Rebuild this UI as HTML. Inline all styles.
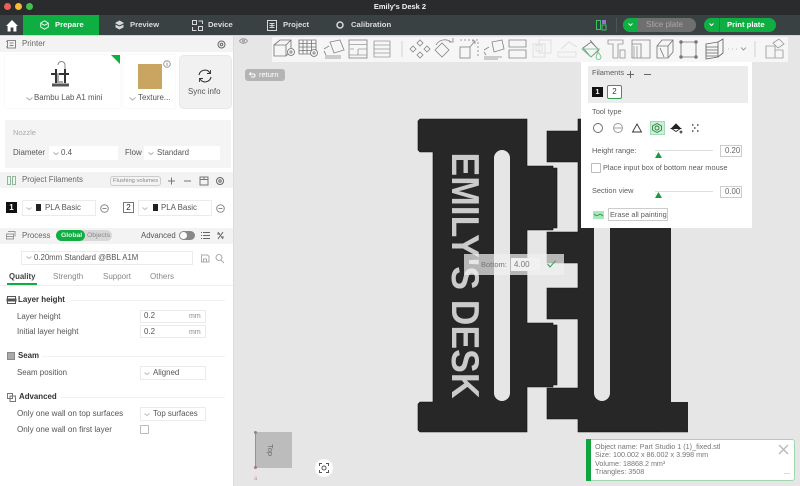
<!DOCTYPE html>
<html><head><meta charset="utf-8">
<style>
html,body{margin:0;padding:0;width:800px;height:486px;overflow:hidden;background:#e6e6e6}
body{font-family:"Liberation Sans",sans-serif;font-size:7.9px;color:#555;position:relative}
#w{position:absolute;left:0;top:0;width:800px;height:486px;overflow:hidden;filter:blur(.35px)}
.a{position:absolute}
.t{position:absolute;white-space:nowrap;line-height:10px}
.p{font-size:7.4px;color:#5c5c5c}
.hd{position:absolute;left:0;width:233px;height:16px;background:#f3f3f3}
.in{position:absolute;background:#fff;border:1px solid #ebebeb;box-sizing:border-box}
.h{font-weight:bold;color:#333}
.nav{position:absolute;top:15px;color:#dcdcdc;font-size:7.700px;font-weight:bold;line-height:20px;white-space:nowrap}
svg{position:absolute;overflow:visible}
</style></head><body><div id="w">

<!-- title bar -->
<div class="a" style="left:0;top:0;width:800px;height:15px;background:#2a2b2d"></div>
<div class="a" style="left:4px;top:3px;width:7px;height:7px;border-radius:50%;background:#ec5f56"></div>
<div class="a" style="left:15px;top:3px;width:7px;height:7px;border-radius:50%;background:#f4b93e"></div>
<div class="a" style="left:26px;top:3px;width:7px;height:7px;border-radius:50%;background:#3ec449"></div>
<div class="t" style="left:300px;width:200px;top:2px;text-align:center;color:#f2f2f2;font-weight:bold;font-size:7.500px">Emily's Desk 2</div>

<!-- tab bar -->
<div class="a" style="left:0;top:15px;width:800px;height:20px;background:#3a4143"></div>
<div class="a" style="left:0;top:35px;width:800px;height:1px;background:#d5d5d5"></div>
<svg style="left:6px;top:20px" width="12" height="12" viewBox="0 0 12 12"><path d="M6 0L0 6h1.600v5.500h3V7.500h2.800v4h3V6H12z" fill="#fff"/></svg>
<div class="a" style="left:23px;top:15px;width:76px;height:20px;background:#0fae42"></div>
<svg style="left:40px;top:20px" width="9" height="10" viewBox="0 0 9 10" fill="none" stroke="#e8f8ec" stroke-width="1"><path d="M4.500 .8L8.300 3v4L4.500 9.200.7 7V3zM.9 3.300l3.600 2 3.600-2"/></svg>
<div class="nav" style="left:55px;color:#f2fff5">Prepare</div>
<svg style="left:115px;top:20px" width="9" height="10" viewBox="0 0 9 10"><path d="M4.500 .5L8.500 2.600v4.800L4.500 9.500.5 7.400V2.600z" fill="#d8d8d8"/><path d="M.5 4l4 2 4-2" stroke="#3a4143" fill="none"/></svg>
<div class="nav" style="left:130px">Preview</div>
<svg style="left:192px;top:20px" width="11" height="11" viewBox="0 0 11 11" fill="none" stroke="#d8d8d8" stroke-width="1"><rect x=".5" y=".5" width="4" height="4"/><rect x="6.500" y="6.500" width="4" height="4"/><path d="M6.500 1h4v3M.5 7v3.500h4"/></svg>
<div class="nav" style="left:208px">Device</div>
<svg style="left:267px;top:20px" width="10" height="11" viewBox="0 0 10 11" fill="none" stroke="#d8d8d8" stroke-width="1"><rect x=".5" y=".5" width="9" height="10"/><path d="M2.500 3.500h5M2.500 5.500h5M2.500 7.500h5M5 3v5"/></svg>
<div class="nav" style="left:283px">Project</div>
<svg style="left:336px;top:21px" width="8" height="8" viewBox="0 0 8 8" fill="none" stroke="#d8d8d8" stroke-width="1.500"><circle cx="4" cy="4" r="3"/></svg>
<div class="nav" style="left:351px">Calibration</div>

<svg style="left:596px;top:20px" width="10" height="10" viewBox="0 0 10 10"><rect x=".5" y=".5" width="4" height="9" fill="none" stroke="#3fc16a"/><rect x="6" y="0" width="4" height="4" fill="#9a6fd0"/><rect x="6" y="5" width="4" height="5" fill="none" stroke="#3fc16a"/></svg>
<div class="a" style="left:616px;top:18px;width:1px;height:14px;background:#4d5557"></div>
<div class="a" style="left:623px;top:18px;width:73px;height:14px;border-radius:7px;background:#6f6f6f;overflow:hidden"><div class="a" style="left:0;top:0;width:15px;height:14px;background:#0fae42"></div></div>
<svg style="left:628px;top:23px" width="5" height="4" fill="none" stroke="#fff"><path d="M.5 .5l2 2 2-2"/></svg>
<div class="t" style="left:646px;top:20px;color:#a9a9a9;font-size:8px">Slice plate</div>
<div class="a" style="left:704px;top:18px;width:72px;height:14px;border-radius:7px;background:#0fae42"></div>
<div class="a" style="left:719px;top:18px;width:1px;height:14px;background:#2f7d46"></div>
<svg style="left:709px;top:23px" width="5" height="4" fill="none" stroke="#fff"><path d="M.5 .5l2 2 2-2"/></svg>
<div class="t" style="left:727px;top:20px;color:#fff;font-weight:bold;font-size:7.700px">Print plate</div>

<!-- sidebar -->
<div class="a" style="left:0;top:36px;width:233px;height:450px;background:#fff"></div>
<div class="hd" style="top:36px"></div>
<svg style="left:6px;top:40px" width="10" height="9" fill="none" stroke="#888"><rect x="1.500" y=".5" width="8" height="7.500"/><path d="M0 1.500h1.500M0 7h1.500M3.500 3h4M3.500 5.500h4"/></svg>
<div class="t" style="left:22px;top:39px;color:#666">Printer</div>
<svg style="left:217px;top:40px" width="9" height="9" fill="none" stroke="#666"><circle cx="4.500" cy="4.500" r="3.500"/><circle cx="4.500" cy="4.500" r="1.300"/></svg>

<div class="a" style="left:5px;top:55px;width:115px;height:53px;background:#fff;box-shadow:0 0 2px #eee"></div>
<svg style="left:111px;top:55px" width="9" height="9"><path d="M0 0h9v9z" fill="#0fae42"/></svg>
<svg style="left:50px;top:61px" width="21" height="28" viewBox="0 0 21 28" fill="none" stroke="#333"><path d="M8 4a3.500 3.500 0 0 1 7 0v4" stroke="#888"/><path d="M6 8v14M15 8v14" stroke-width="2"/><path d="M1 13h18" stroke-width="2"/><path d="M2 24h17" stroke-width="3" stroke="#555"/><path d="M8 12v9h5" stroke="#aaa" stroke-width="2"/></svg>
<svg style="left:26px;top:97px" width="7" height="4" fill="none" stroke="#aaa"><path d="M.5 .5l3 2.500 3-2.500"/></svg>
<div class="t" style="left:34px;top:93px">Bambu Lab A1 mini</div>

<div class="a" style="left:123px;top:55px;width:52px;height:53px;background:#fff;box-shadow:0 0 2px #eee"></div>
<div class="a" style="left:138px;top:64px;width:24px;height:25px;background:#c9a561"></div>
<svg style="left:163px;top:60px" width="8" height="8" fill="none" stroke="#999"><circle cx="4" cy="4" r="3.300"/><path d="M4 3v3M4 1.800v.7"/></svg>
<svg style="left:129px;top:97px" width="7" height="4" fill="none" stroke="#aaa"><path d="M.5 .5l3 2.500 3-2.500"/></svg>
<div class="t" style="left:138px;top:93px">Texture...</div>

<div class="a" style="left:179px;top:55px;width:53px;height:54px;background:#f1f1f1;border-radius:5px;border:1px solid #e8e8e8;box-sizing:border-box"></div>
<svg style="left:197px;top:69px" width="16" height="14" viewBox="0 0 16 14" fill="none" stroke="#333" stroke-width="1.100"><path d="M2 6a6 6 0 0 1 11-2M14 8a6 6 0 0 1-11 2"/><path d="M13.500 1v3.500H10M2.500 13V9.500H6" stroke-width=".9"/></svg>
<div class="t" style="left:188px;top:87px">Sync info</div>

<div class="a" style="left:5px;top:120px;width:226px;height:48px;background:#f4f4f4"></div>
<div class="t" style="left:13px;top:128px;color:#aaa;font-size:7.500px">Nozzle</div>
<div class="t" style="left:13px;top:148px">Diameter</div>
<div class="a" style="left:49px;top:146px;width:69px;height:14px;background:#fff"></div>
<svg style="left:53px;top:152px" width="6" height="4" fill="none" stroke="#aaa"><path d="M.5 .5l2.500 2 2.500-2"/></svg>
<div class="t" style="left:61px;top:148px">0.4</div>
<div class="t" style="left:125px;top:148px">Flow</div>
<div class="a" style="left:144px;top:146px;width:76px;height:14px;background:#fff"></div>
<svg style="left:148px;top:152px" width="6" height="4" fill="none" stroke="#aaa"><path d="M.5 .5l2.500 2 2.500-2"/></svg>
<div class="t" style="left:157px;top:148px">Standard</div>

<!-- filaments -->
<div class="hd" style="top:172px"></div>
<svg style="left:7px;top:176px" width="9" height="9" fill="none" stroke="#8fb79a"><rect x=".5" y=".5" width="3" height="8"/><rect x="5.500" y=".5" width="3" height="8"/></svg>
<div class="t" style="left:22px;top:175px;color:#666">Project Filaments</div>
<div class="a" style="left:110px;top:176px;width:51px;height:10px;border:1px solid #ccc;border-radius:3px;box-sizing:border-box"></div>
<div class="t" style="left:113px;top:176px;font-size:5.800px;color:#888">Flushing volumes</div>
<svg style="left:168px;top:176px" width="60" height="10" fill="none" stroke="#777"><path d="M0 5h7M3.500 1.500v7M16 5h7"/><rect x="32" y="1" width="8" height="8"/><path d="M32 3.500h8M36 1v2.500"/><circle cx="52" cy="5" r="3.500" stroke="#666"/><circle cx="52" cy="5" r="1.200" stroke="#666"/></svg>

<div class="a" style="left:6px;top:202px;width:11px;height:11px;background:#111;color:#fff;text-align:center;font-size:8px;line-height:11px;font-weight:bold">1</div>
<div class="in" style="left:22px;top:200px;width:74px;height:16px"></div>
<svg style="left:26px;top:207px" width="6" height="4" fill="none" stroke="#bbb"><path d="M.5 .5l2.500 2 2.500-2"/></svg>
<div class="a" style="left:36px;top:204px;width:5px;height:7px;background:#222"></div>
<div class="t" style="left:45px;top:203px">PLA Basic</div>
<svg style="left:100px;top:204px" width="9" height="9" fill="none" stroke="#888"><circle cx="4.500" cy="4.500" r="3.800"/><path d="M2.500 4.500h4"/></svg>
<div class="a" style="left:123px;top:202px;width:11px;height:11px;background:#fff;border:1px solid #777;box-sizing:border-box;color:#222;text-align:center;font-size:8px;line-height:9px">2</div>
<div class="in" style="left:138px;top:200px;width:74px;height:16px"></div>
<svg style="left:142px;top:207px" width="6" height="4" fill="none" stroke="#bbb"><path d="M.5 .5l2.500 2 2.500-2"/></svg>
<div class="a" style="left:153px;top:204px;width:5px;height:7px;background:#222"></div>
<div class="t" style="left:161px;top:203px">PLA Basic</div>
<svg style="left:216px;top:204px" width="9" height="9" fill="none" stroke="#888"><circle cx="4.500" cy="4.500" r="3.800"/><path d="M2.500 4.500h4"/></svg>

<!-- process -->
<div class="hd" style="top:228px"></div>
<svg style="left:6px;top:231px" width="10" height="9" fill="none" stroke="#999"><path d="M2 .5h7v5M.5 3h7v5h-7zM.5 5.500h7"/></svg>
<div class="t" style="left:22px;top:231px;color:#666">Process</div>
<div class="a" style="left:56px;top:230px;width:56px;height:11px;border-radius:6px;background:#d8d8d8"></div>
<div class="a" style="left:56px;top:230px;width:29px;height:11px;border-radius:6px;background:#0fae42"></div>
<div class="t" style="left:61px;top:231px;color:#dff5e5;font-size:6.800px;font-weight:bold">Global</div>
<div class="t" style="left:87px;top:231px;color:#888;font-size:6.800px">Objects</div>
<div class="t" style="left:141px;top:231px;color:#555;font-size:7.800px">Advanced</div>
<div class="a" style="left:179px;top:231px;width:16px;height:9px;border-radius:5px;background:#888"></div>
<div class="a" style="left:180px;top:232px;width:7px;height:7px;border-radius:50%;background:#fff"></div>
<svg style="left:201px;top:231px" width="24" height="9" fill="none" stroke="#666"><path d="M2 1.500h7M2 4.500h7M2 7.500h7M0 1.500h1M0 4.500h1M0 7.500h1"/><path d="M17 1l5 7M22 1l-2 3M17 8l2-3M16 3h3M20 6h3"/></svg>

<div class="in" style="left:21px;top:251px;width:172px;height:14px"></div>
<svg style="left:26px;top:256px" width="6" height="4" fill="none" stroke="#bbb"><path d="M.5 .5l2.500 2 2.500-2"/></svg>
<div class="t" style="left:34px;top:253px;font-size:7.800px">0.20mm Standard @BBL A1M</div>
<svg style="left:201px;top:254px" width="24" height="9" fill="none" stroke="#aaa"><path d="M.5 1h6l1.500 1.500V8h-7.500z"/><rect x="2.500" y="5" width="3" height="3"/><circle cx="18" cy="3.500" r="3"/><path d="M20 6l3 3"/></svg>

<div class="t" style="left:9px;top:272px;font-weight:bold;color:#444;font-size:7.800px">Quality</div>
<div class="t" style="left:53px;top:272px;color:#888;font-size:8px">Strength</div>
<div class="t" style="left:103px;top:272px;color:#888;font-size:8px">Support</div>
<div class="t" style="left:150px;top:272px;color:#888;font-size:8px">Others</div>
<div class="a" style="left:0;top:285px;width:233px;height:1px;background:#eee"></div>
<div class="a" style="left:7px;top:283px;width:30px;height:2px;background:#0fae42"></div>

<svg style="left:7px;top:296px" width="9" height="8" fill="none" stroke="#555"><rect x=".5" y=".5" width="8" height="7"/><rect x="0" y="3" width="9" height="2" fill="#555"/></svg>
<div class="t h" style="left:18px;top:295px">Layer height</div>
<div class="a" style="left:70px;top:300px;width:155px;height:1px;background:#f2f2f2"></div>
<div class="t" style="left:17px;top:312px">Layer height</div>
<div class="in" style="left:140px;top:310px;width:66px;height:13px"></div>
<div class="t" style="left:144px;top:311px">0.2</div>
<div class="t" style="left:189px;top:312px;font-size:7px;color:#888">mm</div>
<div class="t" style="left:17px;top:327px">Initial layer height</div>
<div class="in" style="left:140px;top:325px;width:66px;height:13px"></div>
<div class="t" style="left:144px;top:327px">0.2</div>
<div class="t" style="left:189px;top:328px;font-size:7px;color:#888">mm</div>

<div class="a" style="left:7px;top:352px;width:8px;height:8px;background:#aaa;border:1px solid #888;box-sizing:border-box"></div>
<div class="t h" style="left:18px;top:351px">Seam</div>
<div class="a" style="left:42px;top:356px;width:183px;height:1px;background:#f2f2f2"></div>
<div class="t" style="left:17px;top:368px">Seam position</div>
<div class="in" style="left:140px;top:366px;width:66px;height:14px"></div>
<svg style="left:144px;top:372px" width="6" height="4" fill="none" stroke="#bbb"><path d="M.5 .5l2.500 2 2.500-2"/></svg>
<div class="t" style="left:153px;top:368px">Aligned</div>

<svg style="left:7px;top:393px" width="9" height="9" fill="none" stroke="#777"><rect x=".5" y=".5" width="5" height="5"/><rect x="3" y="3" width="5.500" height="5.500"/></svg>
<div class="t h" style="left:19px;top:392px">Advanced</div>
<div class="a" style="left:60px;top:397px;width:165px;height:1px;background:#f2f2f2"></div>
<div class="t" style="left:17px;top:409px;font-size:8.100px">Only one wall on top surfaces</div>
<div class="in" style="left:140px;top:407px;width:66px;height:14px"></div>
<svg style="left:144px;top:413px" width="6" height="4" fill="none" stroke="#bbb"><path d="M.5 .5l2.500 2 2.500-2"/></svg>
<div class="t" style="left:153px;top:409px">Top surfaces</div>
<div class="t" style="left:17px;top:425px;font-size:8.100px">Only one wall on first layer</div>
<div class="a" style="left:140px;top:425px;width:9px;height:9px;border:1px solid #bbb;box-sizing:border-box;border-radius:1px"></div>

<div class="a" style="left:233px;top:36px;width:1px;height:450px;background:#dcdcdc"></div>

<!-- viewport shapes -->
<svg style="left:0;top:0" width="800" height="486">
<path fill="#272727" stroke="#111" stroke-width=".6" d="M420 119H527V166H553V168H557V228H553V230H527V323H553V325H557V385H553V387H527V432H420L418 430V404L420 402H433V152H420L418 150V121Z"/>
<path fill="#272727" stroke="#111" stroke-width=".6" d="M578 119H700V432H578V419H547V388H578V319H547V288H578V263H547V232H578V162H547V131H578Z"/>
<path fill="#272727" d="M660 402H685L688 404V430L685 432H660Z"/>
<path fill="#e6e6e6" d="M671 228H705V402H671Z"/>
<path fill="#e6e6e6" d="M688 402H705V436H688Z"/>
<path fill="#e6e6e6" d="M494 158a8 8 0 0 1 16 0V393a8 8 0 0 1-16 0Z"/>
<path fill="#e6e6e6" d="M594 210H610V393a8 8 0 0 1-16 0Z"/>
<text transform="translate(452 152.500) rotate(90)" font-family="Liberation Sans" font-weight="bold" font-size="38.500" fill="#cbcbcb" textLength="246" lengthAdjust="spacingAndGlyphs">EMILY'S DESK</text>
</svg>

<!-- Bottom input -->
<div class="a" style="left:464px;top:254px;width:100px;height:21px;background:rgba(240,240,240,.72)"></div>
<div class="t" style="left:481px;top:260px;color:#777;font-size:7.500px">Bottom:</div>
<div class="a" style="left:511px;top:258px;width:29px;height:13px;background:#f1f1f1"></div>
<div class="t" style="left:514px;top:260px;color:#777;font-size:8px">4.00</div>
<svg style="left:547px;top:260px" width="9" height="8" fill="none" stroke="#2f9d50" stroke-width="1"><path d="M.5 4l2.500 3L8.500 .8"/></svg>

<!-- toolbar -->
<div class="a" style="left:272px;top:37px;width:516px;height:25px;background:#f6f6f6"></div>
<svg style="left:270px;top:36px" width="530" height="26" fill="none" stroke="#777" stroke-width=".85">
<!-- box plus -->
<path d="M4 9l6-5h11v11l-5 5H4zM4 9h12v11M16 9l5-5"/><circle cx="21" cy="16" r="3.500" fill="#f6f6f6"/><path d="M19 16h4M21 14v4"/>
<!-- grid plus -->
<path d="M29 4h17v14H29zM29 7.500h17M29 11h17M29 14.500h17M33 4v14M37 4v14M41.500 4v14"/><circle cx="44" cy="17" r="3.500" fill="#f6f6f6"/><path d="M42 17h4M44 15v4"/>
<!-- arrange -->
<path d="M60 6l10-2 4 10-10 3zM54 13l5-3M54 15l2 4M55 20h16M55 22h16" stroke="#888"/>
<!-- layout -->
<rect x="79" y="4" width="18" height="18" stroke="#888"/><path d="M79 8.500h18M79 19h18M88 13h9M88 13v6M80 13h4" stroke="#999"/>
<!-- lines -->
<path d="M104 5h16v4h-16zM104 9h16v4h-16zM104 13h16v4h-16zM104 17h16v4h-16z" stroke="#999"/>
<path d="M132 5v16" stroke="#ccc"/>
<!-- move -->
<path d="M147 7l3-3 3 3-3 3zM147 19l3-3 3 3-3 3zM140 13l3-3 3 3-3 3zM154 13l3-3 3 3-3 3z" stroke="#888"/>
<!-- rotate -->
<path d="M165 14l7-7 7 7-7 7zM166 9a10 10 0 0 1 15-3M183 2v4h-4" stroke="#888"/>
<!-- scale -->
<rect x="190" y="11" width="10" height="11" stroke="#888"/><path d="M190 4h18v16" stroke-dasharray="2 2" stroke="#888"/><path d="M200 11l5-6M202 5h3v3" stroke="#888"/>
<!-- lay flat -->
<path d="M222 6l10-2 2 9-10 3zM214 14l5-3M214 16l2 3M214 21h18M214 23h14" stroke="#888"/>
<!-- split -->
<path d="M239 4h17v7h-17zM239 14h17v8h-17z" stroke="#888"/>
<!-- faded -->
<g stroke="#dcdcdc"><rect x="263" y="8" width="12" height="13"/><rect x="269" y="4" width="12" height="13"/><rect x="266" y="9" width="6" height="6"/><path d="M291 13l8-7 8 5M288 16h18v5h-18z"/></g>
<!-- paint -->
<path d="M313 12l8-6 8 8-8 7zM320 4l6 7" stroke="#777"/><path d="M312 13h17l-8 8z" stroke="#6cbf86"/><path d="M328 16c2 3 3 4 3 5a2.500 2.500 0 0 1-5 0c0-1 1-2 2-5z" stroke="#6cbf86"/>
<!-- T -->
<path d="M338 4h15v4h-5v14h-5V8h-5z" stroke="#999"/><rect x="350" y="14" width="5" height="8" stroke="#999"/>
<!-- assembly -->
<path d="M362 4h18v18h-18zM362 8h9v14h-9z" stroke="#888"/><path d="M364 10v12M367 10v12" stroke="#999"/>
<!-- cube -->
<path d="M387 10l5-6h11v12l-5 6h-11zM387 10h11v12M398 10l5-6M390 12l4 9" stroke="#777"/>
<!-- corners -->
<rect x="411" y="6" width="15" height="15" rx="2"/><circle cx="411" cy="6" r="1.300" fill="#777"/><circle cx="426" cy="6" r="1.300" fill="#777"/><circle cx="411" cy="21" r="1.300" fill="#777"/><circle cx="426" cy="21" r="1.300" fill="#777"/>
<!-- layers -->
<path d="M436 8l12-2 5-3v14l-5 4-12 2zM436 11h12M436 14h12M436 17h12M436 20h12M448 6v15" stroke="#666"/>
<!-- more -->
<path d="M458 13h1M462 13h1M466 13h1" stroke="#aaa"/><path d="M471 11.500l2.500 2.500 2.500-2.500" stroke="#888"/>
<path d="M485 5v16" stroke="#ccc"/>
<!-- assembly right -->
<path d="M496 10h9v12h-9zM505 14h8v8h-8zM503 7l6-4 5 5-6 4z" stroke="#999"/>
</svg>

<!-- eye & return -->
<svg style="left:239px;top:38px" width="9" height="6" fill="none" stroke="#999"><path d="M.5 3c2-3 6-3 8 0-2 3-6 3-8 0z"/><circle cx="4.500" cy="3" r="1"/></svg>
<div class="a" style="left:245px;top:69px;width:40px;height:12px;border-radius:3px;background:#b4b4b4"></div>
<div class="t" style="left:259px;top:70px;color:#fff;font-size:7.500px">return</div>
<svg style="left:249px;top:72px" width="7" height="6" fill="none" stroke="#fff"><path d="M2 .5L.5 2 2 3.500M.5 2h4a1.500 1.500 0 0 1 0 3H2"/></svg>

<!-- popup -->
<div class="a" style="left:581px;top:62px;width:171px;height:166px;background:#fff"></div>
<div class="a" style="left:588px;top:66px;width:160px;height:37px;background:#ececec"></div>
<div class="t p" style="left:592px;top:68px">Filaments</div>
<svg style="left:627px;top:70px" width="26" height="9" fill="none" stroke="#666"><path d="M0 4.500h7M3.500 1v7M17 4.500h7"/></svg>
<div class="a" style="left:592px;top:87px;width:11px;height:10px;background:#111;color:#fff;text-align:center;font-size:7.500px;line-height:10px;font-weight:bold">1</div>
<div class="a" style="left:607px;top:85px;width:15px;height:14px;background:#fff;border:1px solid #2f9d50;border-radius:2px;box-sizing:border-box;color:#333;text-align:center;font-size:8px;line-height:12px">2</div>
<div class="t p" style="left:592px;top:107px">Tool type</div>
<div class="a" style="left:650px;top:121px;width:15px;height:14px;background:#cdeed7;border:1px solid #a0dcb4;box-sizing:border-box"></div>
<svg style="left:590px;top:122px" width="112" height="12" fill="none" stroke="#666" stroke-width=".9"><circle cx="8" cy="6" r="4.500"/><circle cx="28" cy="6" r="4.500" stroke="#999"/><path d="M24 6h8" stroke="#999"/><path d="M47 2l4.500 8h-9z" stroke="#333"/><path d="M67 1.500l4.500 2.500v4L67 10.500 62.500 8V4z" stroke="#2f7d46"/><circle cx="67" cy="6" r="2" stroke="#2f7d46"/><path d="M86 2l4.500 4.500H81.500z" fill="#222" stroke="#222"/><path d="M81.500 6.500h9l-4.500 3z" stroke="#222"/><circle cx="91" cy="10" r="1" fill="#222"/><path d="M102 3h1.500M107 3h1.500M104 6h1.500M102 9h1.500M107 9h1.500" stroke="#222" stroke-width="1.300"/></svg>
<div class="t p" style="left:592px;top:146px">Height range:</div>
<div class="a" style="left:655px;top:150px;width:58px;height:1px;background:#ddd"></div>
<svg style="left:655px;top:152px" width="7" height="6"><path d="M3.500 0L7 6H0z" fill="#1d9a40"/></svg>
<div class="in" style="left:720px;top:145px;width:22px;height:12px;border-color:#ccc"></div>
<div class="t" style="left:725px;top:146px;font-size:7.800px;color:#666">0.20</div>
<div class="a" style="left:591px;top:163px;width:10px;height:10px;border:1px solid #bbb;box-sizing:border-box;border-radius:1px;background:#fff"></div>
<div class="t p" style="left:603px;top:163px">Place input box of bottom near mouse</div>
<div class="t p" style="left:592px;top:186px">Section view</div>
<div class="a" style="left:655px;top:191px;width:58px;height:1px;background:#ddd"></div>
<svg style="left:655px;top:192px" width="7" height="6"><path d="M3.500 0L7 6H0z" fill="#1d9a40"/></svg>
<div class="in" style="left:720px;top:186px;width:22px;height:12px;border-color:#ccc"></div>
<div class="t" style="left:725px;top:187px;font-size:7.800px;color:#666">0.00</div>
<svg style="left:593px;top:211px" width="11" height="8"><rect width="11" height="8" fill="#a8e6bd"/><path d="M1 3c2 2 3 2 4.500 1S8 3 10 5" fill="none" stroke="#3a9c5c"/></svg>
<div class="a" style="left:608px;top:208px;width:60px;height:13px;border:1px solid #ccc;box-sizing:border-box"></div>
<div class="t p" style="left:610px;top:210px">Erase all painting</div>

<!-- nav cube -->
<div class="a" style="left:255px;top:432px;width:37px;height:36px;background:#bcbcbc"></div>
<div class="a" style="left:255px;top:432px;width:1px;height:36px;background:#c87a8a"></div>
<div class="a" style="left:254px;top:431px;width:3px;height:3px;border-radius:50%;background:#888"></div>
<div class="a" style="left:254px;top:466px;width:3px;height:3px;border-radius:50%;background:#a07a85"></div>
<div class="t" style="left:264px;top:445px;font-size:7.500px;color:#666;transform:rotate(90deg)">Top</div>
<div class="t" style="left:254px;top:474px;font-size:6px;color:#c99">a</div>
<div class="a" style="left:315px;top:459px;width:18px;height:18px;border-radius:50%;background:#fff"></div>
<svg style="left:319px;top:463px" width="10" height="10" fill="none" stroke="#555"><path d="M.5 3V.5H3M7 .5h2.500V3M9.500 7v2.500H7M3 9.500H.5V7"/><circle cx="5" cy="5" r="2"/></svg>

<!-- notification -->
<div class="a" style="left:586px;top:439px;width:209px;height:42px;background:#fff;border:1px solid #9fd6b0;border-radius:3px;box-sizing:border-box"></div>
<div class="a" style="left:586px;top:439px;width:5px;height:42px;background:#12a53f"></div>
<div class="t" style="left:595px;top:442px;font-size:7.200px;color:#777">Object name: Part Studio 1 (1)_fixed.stl</div>
<div class="t" style="left:595px;top:450px;font-size:7.200px;color:#777">Size: 100.002 x 86.002 x 3.998 mm</div>
<div class="t" style="left:595px;top:459px;font-size:7.200px;color:#777">Volume: 18868.2 mm³</div>
<div class="t" style="left:595px;top:467px;font-size:7.200px;color:#777">Triangles: 3508</div>
<svg style="left:778px;top:444px" width="11" height="11" fill="none" stroke="#bbb" stroke-width="1.500"><path d="M1 1l9 9M10 1l-9 9"/></svg>
<div class="a" style="left:784px;top:473px;width:6px;height:1px;background:#ddd"></div>

</div></body></html>
